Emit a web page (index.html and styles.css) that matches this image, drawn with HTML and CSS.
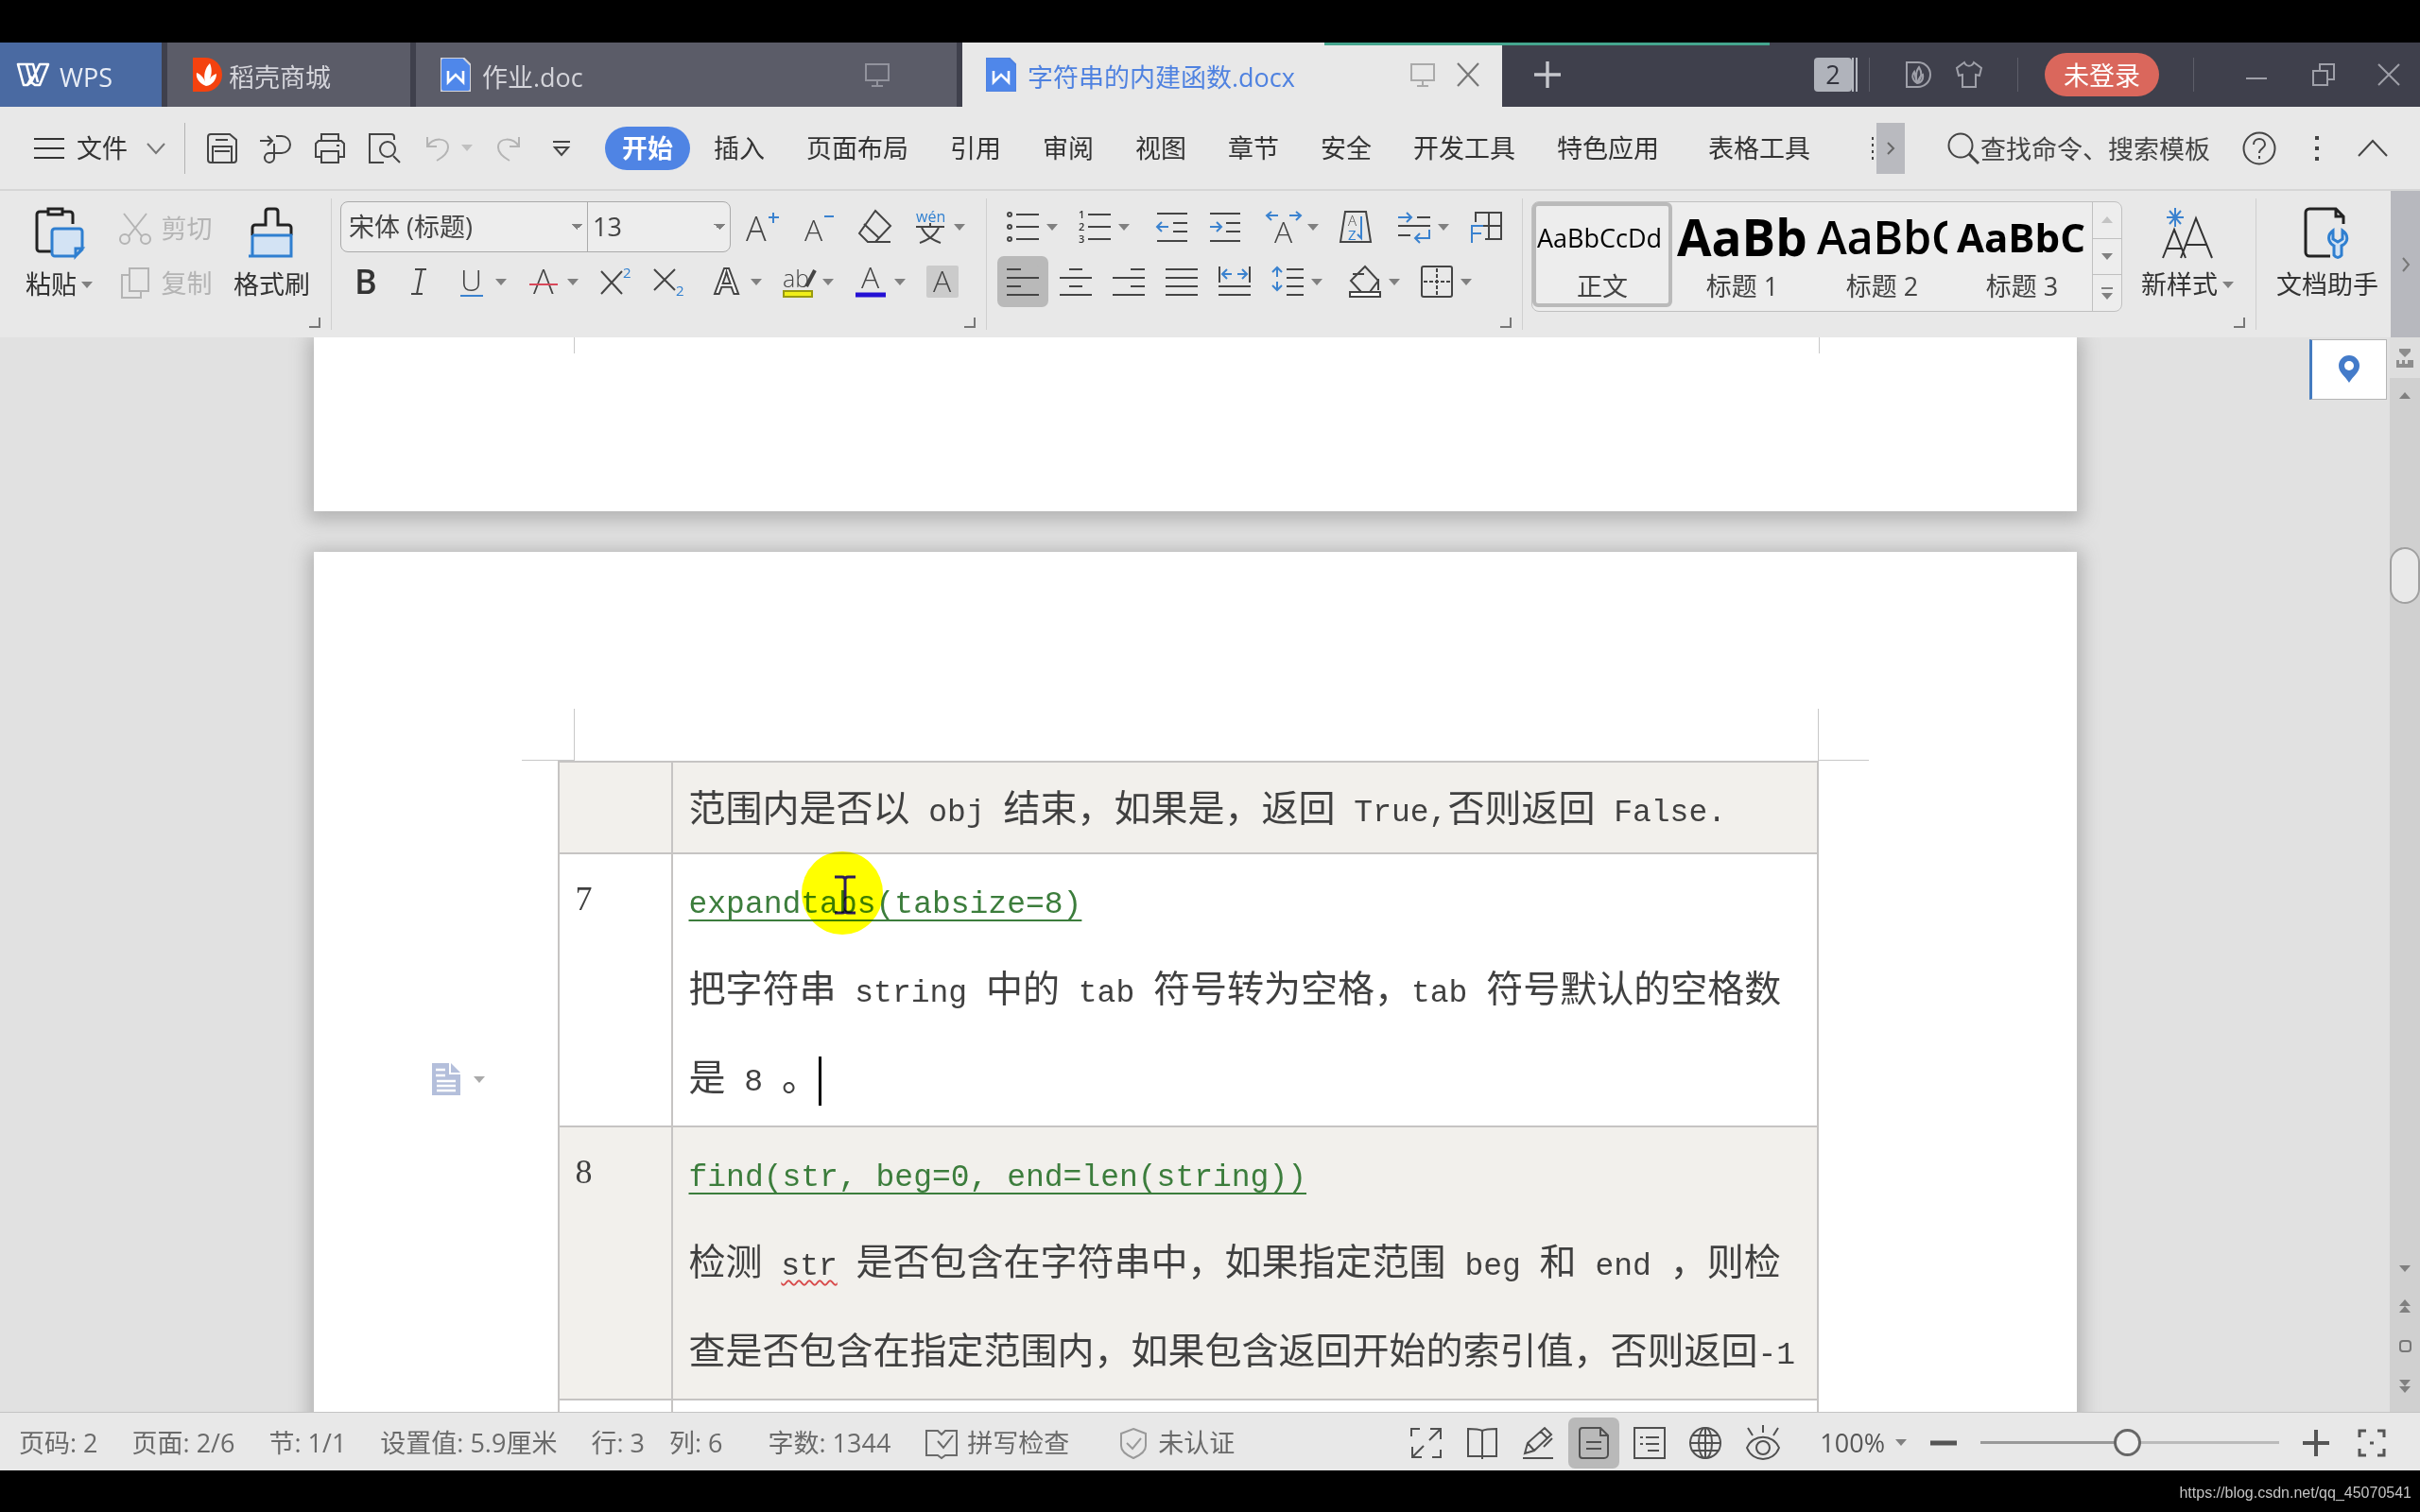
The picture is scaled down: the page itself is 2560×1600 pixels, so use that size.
FILE: index.html
```html
<!DOCTYPE html>
<html lang="zh-CN">
<head>
<meta charset="utf-8">
<title>字符串的内建函数.docx</title>
<link rel="stylesheet" href="styles.css">
</head>
<body>
<svg class="defs" aria-hidden="true">
  <symbol id="doc" viewBox="0 0 32 36"><path d="M3 0h21l8 8v25a3 3 0 0 1-3 3H3a3 3 0 0 1-3-3V3a3 3 0 0 1 3-3z" fill="#4f87ea"/><path d="M8 14v12l8-8 8 8V14" fill="none" stroke="#fff" stroke-width="2.6"/></symbol>
  <symbol id="screen" viewBox="0 0 28 28"><path d="M2 3h24v17H2zM14 20v6M8 26h12" fill="none" stroke="currentColor" stroke-width="2"/></symbol>
  <symbol id="mark" viewBox="0 0 12 12"><path d="M11 0v10H0" fill="none" stroke="#777" stroke-width="2"/></symbol>
</svg>

<header class="tabbar">
  <button class="tab home"><svg class="i34" viewBox="0 0 34 34"><path d="M1 6h9l5 19-4 3h-4zM10 6h7l5 19M24 28h-5l-4-3 9-19h9zM11 28l5-9" fill="none" stroke="#fff" stroke-width="2.6" stroke-linejoin="round"/></svg><span>WPS</span></button>
  <button class="tab store"><svg class="i36" viewBox="0 0 36 36"><path d="M3 0h13a18 18 0 0 1 0 36H3z" fill="#f4420f" stroke="none"/><path d="M17 30c-8-3-11-9-10-14 5 2 8 6 9 10-2-8 0-15 5-20 3 7 2 14-2 20 2-5 5-8 9-9 0 6-4 12-11 13z" fill="#fff" stroke="none"/></svg><span>稻壳商城</span></button>
  <button class="tab file"><svg class="docico"><use href="#doc"/></svg><span class="grow">作业.doc</span><svg class="i28 dim"><use href="#screen"/></svg></button>
  <button class="tab current"><svg class="docico"><use href="#doc"/></svg><span class="grow">字符串的内建函数.docx</span><svg class="i28"><use href="#screen"/></svg><svg class="i28" viewBox="0 0 28 28"><path d="M3 2l22 24M25 2L3 26" stroke="#777" stroke-width="2.2"/></svg></button>
  <button class="newtab" aria-label="新建"><svg class="i28" viewBox="0 0 28 28"><path d="M14 0v28M0 14h28" stroke="#c6c7cd" stroke-width="3.4"/></svg></button>
  <span class="progress"></span>
  <div class="winbar">
    <span class="count"><b>2</b></span>
    <i class="vr"></i>
    <svg class="i30" viewBox="0 0 30 30"><path d="M3 2h12a13 13 0 0 1 0 26H3z" /><path d="M14 24c-5-3-6-8-3-12l3 12c-2-8-1-13 2-17 3 5 3 11-1 16 1-4 3-7 5-8 1 5-2 9-6 9z"/></svg>
    <svg class="i30" viewBox="0 0 30 30"><path d="M10 2L2 8l2 8 4-1v13h14V15l4 1 2-8-8-6c-2 5-8 5-10 0z"/></svg>
    <i class="vr wide"></i>
    <button class="login">未登录</button>
    <i class="vr wide"></i>
    <svg class="i24 min" viewBox="0 0 24 24"><path d="M1 16h22"/></svg>
    <svg class="i26" viewBox="0 0 26 26"><path d="M2 9h15v15H2zM9 9V2h15v16h-7"/></svg>
    <svg class="i24" viewBox="0 0 24 24"><path d="M1 1l22 22M23 1L1 23"/></svg>
  </div>
</header>

<nav class="menubar">
  <button class="filemenu"><svg class="i32" viewBox="0 0 32 32"><path d="M0 6h32M0 16h32M0 26h32"/></svg>文件<svg class="i20" viewBox="0 0 20 20"><path d="M1 5l9 10 9-10" stroke="#777"/></svg></button>
  <i class="sep"></i>
  <div class="quick">
    <svg class="i34" viewBox="0 0 34 34"><path d="M5 2h20l7 6v21a3 3 0 0 1-3 3H5a3 3 0 0 1-3-3V5a3 3 0 0 1 3-3zM10 8h13M7 32V15h20v17M9 20h16"/></svg>
    <svg class="i34" viewBox="0 0 34 34"><path d="M0 9h12M8 4l5 5-5 5M17 4h6a9 9 0 0 1 0 18H9a5 5 0 1 0 6 5V12"/></svg>
    <svg class="i34" viewBox="0 0 34 34"><path d="M8 9V2h18v7M8 26H2V12l3-3h24l3 3v14h-6M8 20h18v12H8zM24 14h3"/></svg>
    <svg class="i34" viewBox="0 0 34 34"><path d="M28 8V5a3 3 0 0 0-3-3H2v30h15M27 25l7 7"/><circle cx="21" cy="18" r="8"/></svg>
    <span class="pair pale"><svg class="i28" viewBox="0 0 28 28"><path d="M2 2v10h10M2 12C8 2 24 2 24 13c0 6-5 10-12 14"/></svg><i class="dd"></i></span>
    <svg class="i28 pale" viewBox="0 0 28 28"><path d="M26 2v10H16M26 12C20 2 4 2 4 13c0 6 5 10 12 14"/></svg>
    <svg class="i20" viewBox="0 0 20 20"><path d="M1 3h18M3 9l7 8 7-8z"/></svg>
  </div>
  <div class="menus">
    <button class="active">开始</button><button>插入</button><button>页面布局</button><button>引用</button><button>审阅</button><button>视图</button><button>章节</button><button>安全</button><button>开发工具</button><button>特色应用</button><button class="extra">表格工具</button>
  </div>
  <div class="right">
    <span class="more"><svg class="dots6" viewBox="0 0 4 24"><path d="M2 0v24" stroke-dasharray="3 4"/></svg><button class="pager" aria-label="更多"><svg class="i14" viewBox="0 0 14 14"><path d="M4 1l6 6-6 6"/></svg></button></span>
    <label class="search"><svg class="i36" viewBox="0 0 36 36"><circle cx="15" cy="15" r="12.5"/><path d="M24 24l10 10" stroke-width="3"/></svg><input type="text" value="查找命令、搜索模板" aria-label="搜索"></label>
    <svg class="i36" viewBox="0 0 36 36"><circle cx="18" cy="18" r="16.5"/><path d="M12 14c0-8 12-8 12 0 0 4-6 4-6 9M18 26v3"/></svg>
    <svg class="i30" viewBox="0 0 30 30"><path d="M15 2v4M15 13v4M15 24v4" stroke-width="4"/></svg>
    <svg class="i32" viewBox="0 0 32 32"><path d="M1 24L16 8l15 16"/></svg>
  </div>
</nav>

<section class="ribbon">
  <div class="group clip">
    <button class="big"><svg class="i54" viewBox="0 0 54 54"><path d="M16 5H6a3 3 0 0 0-3 3v36a3 3 0 0 0 3 3h12M30 5h8a3 3 0 0 1 3 3v10M15 2h15v6H15z" class="k"/><path d="M22 23h26a3 3 0 0 1 3 3v19l-7 7H22a3 3 0 0 1-3-3V26a3 3 0 0 1 3-3zM51 44h-7v8z" class="bf"/></svg><span>粘贴<i class="dd"></i></span></button>
    <div class="stack pale">
      <button><svg class="i34" viewBox="0 0 34 34"><path d="M5 1l19 24M29 1L10 25"/><circle cx="6" cy="28" r="5"/><circle cx="28" cy="28" r="5"/></svg>剪切</button>
      <button><svg class="i34" viewBox="0 0 34 34"><path d="M11 1h20v24H11zM11 8H3v24h20v-7"/></svg>复制</button>
    </div>
    <button class="big"><svg class="i54" viewBox="0 0 54 54"><path d="M6 30V22a3 3 0 0 1 3-3h11V5q0-3 3-3h7q3 0 3 3v14h11a3 3 0 0 1 3 3v8" class="k"/><path d="M6 30h41v22H2M6 30v22" class="bf"/></svg><span>格式刷</span></button>
    <svg class="corner"><use href="#mark"/></svg>
  </div>

  <div class="group fontgrp">
    <div class="row">
      <div class="fontbox"><select class="face" aria-label="字体"><option>宋体 (标题)</option></select><select class="size" aria-label="字号"><option>13</option></select></div>
      <div class="set loose">
        <button class="t"><svg class="i34" viewBox="0 0 34 34"><text x="-1" y="32" font-size="36">A</text><path d="M28 2v11M23 7h11" class="b"/></svg></button>
        <button class="t"><svg class="i34" viewBox="0 0 34 34"><text x="2" y="32" font-size="32">A</text><path d="M23 6h10" class="b"/></svg></button>
        <button class="t"><svg class="i34" viewBox="0 0 34 34"><path d="M18 0l16 16-16 17h-8L1 24zM6 14l16 15M10 33h24"/></svg></button>
        <button class="t"><svg class="i34" viewBox="0 0 34 34"><text x="2" y="12" font-size="16" class="bt">wén</text><path d="M2 17h30M17 13v4M8 18c4 8 11 13 20 16M26 18c-4 8-11 13-20 16"/></svg><i class="dd"></i></button>
      </div>
    </div>
    <div class="row low">
      <div class="set">
        <button class="t"><svg class="i34" viewBox="0 0 34 34"><text x="5" y="30" font-size="36" class="sb">B</text></svg></button>
        <button class="t"><svg class="i34" viewBox="0 0 34 34"><path d="M13 4h12M9 30h12M20 4l-5 26"/></svg></button>
        <button class="t"><svg class="i34" viewBox="0 0 34 34"><text x="5" y="27" font-size="32">U</text><path d="M5 32h24" class="b"/></svg><i class="dd"></i></button>
        <button class="t"><svg class="i34" viewBox="0 0 34 34"><text x="6" y="30" font-size="36">A</text><path d="M2 20h30" stroke="#d8485a"/></svg><i class="dd"></i></button>
        <button class="t"><svg class="i34" viewBox="0 0 34 34"><path d="M2 6l22 24M24 6L2 30"/><text x="25" y="13" font-size="15" class="bt">2</text></svg></button>
        <button class="t"><svg class="i34" viewBox="0 0 34 34"><path d="M2 4l22 22M24 4L2 26"/><text x="25" y="32" font-size="15" class="bt">2</text></svg></button>
      </div>
      <div class="set">
        <button class="t"><svg class="i34" viewBox="0 0 34 34"><text x="4" y="30" font-size="38" class="outl">A</text></svg><i class="dd"></i></button>
        <button class="t"><svg class="i34" viewBox="0 0 34 34"><text x="0" y="23" font-size="25">ab</text><path d="M34 5L25 22" stroke-width="4"/><rect x="1" y="27" width="30" height="6" fill="#f0ee18" stroke="#999a10"/></svg><i class="dd"></i></button>
        <button class="t"><svg class="i34" viewBox="0 0 34 34"><text x="7" y="24" font-size="32">A</text><path d="M1 31h32" stroke="#2410d4" stroke-width="5"/></svg><i class="dd"></i></button>
        <button class="t"><svg class="i34" viewBox="0 0 34 34"><rect width="34" height="34" rx="2" fill="#cbcbcb" stroke="none"/><text x="7" y="28" font-size="32">A</text></svg></button>
      </div>
    </div>
    <svg class="corner"><use href="#mark"/></svg>
  </div>

  <div class="group paragrp">
    <div class="row">
      <div class="set">
        <button class="t"><svg class="i34" viewBox="0 0 34 34"><path d="M10 4h24M10 17h24M10 30h24"/><circle cx="3" cy="4" r="2"/><circle cx="3" cy="17" r="2"/><circle cx="3" cy="30" r="2"/></svg><i class="dd"></i></button>
        <button class="t"><svg class="i34" viewBox="0 0 34 34"><path d="M10 4h24M10 17h24M10 30h24"/><text x="0" y="8" font-size="11" class="sb">1</text><text x="0" y="21" font-size="11" class="sb">2</text><text x="0" y="34" font-size="11" class="sb">3</text></svg><i class="dd"></i></button>
      </div>
      <div class="set">
        <button class="t"><svg class="i34" viewBox="0 0 34 34"><path d="M1 3h32M18 13h15M18 22h15M1 32h32"/><path d="M1 17h12M6 12l-5 5 5 5" class="b"/></svg></button>
        <button class="t"><svg class="i34" viewBox="0 0 34 34"><path d="M1 3h32M18 13h15M18 22h15M1 32h32"/><path d="M1 17h12M8 12l5 5-5 5" class="b"/></svg></button>
      </div>
      <div class="set">
        <button class="t"><svg class="i34" viewBox="0 0 34 34"><text x="7" y="34" font-size="32">A</text><path d="M-1 5h12M4 1L-1 5l5 5M23 5h12M30 1l5 4-5 5" class="b"/></svg><i class="dd"></i></button>
        <button class="t"><svg class="i34" viewBox="0 0 34 34"><path d="M6 1h22l5 32H1z"/><text x="9" y="16" font-size="15">A</text><text x="9" y="31" font-size="15" class="bt">Z</text><path d="M23 6v23l-4-4" class="b"/></svg></button>
      </div>
      <div class="set">
        <button class="t"><svg class="i34" viewBox="0 0 34 34"><path d="M20 7h14M0 16h34M0 26h13"/><path d="M0 7h14M9 2l5 5-5 5M33 20v9H18M23 24l-5 5 5 5" class="b"/></svg><i class="dd"></i></button>
        <button class="t"><svg class="i34" viewBox="0 0 34 34"><path d="M6 12V2h27v28H16M6 16h27M20 2v28"/><path d="M14 16H2v18M2 24h10" class="b"/></svg></button>
      </div>
    </div>
    <div class="row">
      <div class="set">
        <button class="t on"><svg class="i34" viewBox="0 0 34 34"><path d="M0 4h15M0 13h34M0 22h15M0 31h34"/></svg></button>
        <button class="t"><svg class="i34" viewBox="0 0 34 34"><path d="M10 4h14M0 13h34M10 22h14M0 31h34"/></svg></button>
        <button class="t"><svg class="i34" viewBox="0 0 34 34"><path d="M19 4h15M0 13h34M19 22h15M0 31h34"/></svg></button>
        <button class="t"><svg class="i34" viewBox="0 0 34 34"><path d="M0 4h34M0 13h34M0 22h34M0 31h34"/></svg></button>
        <button class="t"><svg class="i34" viewBox="0 0 34 34"><path d="M1 1v17M33 1v17M0 22h34M0 31h34"/><path d="M4 9h10M9 4L4 9l5 5M20 9h10M25 4l5 5-5 5" class="b"/></svg></button>
        <button class="t"><svg class="i34" viewBox="0 0 34 34"><path d="M16 4h18M16 13h18M16 22h18M16 31h18"/><path d="M6 12V3M1 7l5-5 5 5M6 17v9M1 21l5 5 5-5" class="b"/></svg><i class="dd"></i></button>
      </div>
      <div class="set">
        <button class="t"><svg class="i34" viewBox="0 0 34 34"><path d="M17 1L2 16l11 12h9l9-12zM4 9h12M31 14v12"/><rect x="1" y="28" width="32" height="5" fill="#fff"/></svg><i class="dd"></i></button>
        <button class="t"><svg class="i34" viewBox="0 0 34 34"><rect x="1" y="1" width="32" height="32" rx="2"/><path d="M17 3v28M3 17h28" stroke-dasharray="4 2"/></svg><i class="dd"></i></button>
      </div>
    </div>
    <svg class="corner"><use href="#mark"/></svg>
  </div>

  <div class="group stylesgrp">
    <div class="gallery">
      <button class="style sel"><span class="pv p0">AaBbCcDd</span>正文</button>
      <button class="style"><span class="pv p1">AaBb</span>标题 1</button>
      <button class="style"><span class="pv p2">AaBbC</span>标题 2</button>
      <button class="style"><span class="pv p3">AaBbC</span>标题 3</button>
      <div class="gscroll"><span><i class="dd up"></i></span><span><i class="dd"></i></span><span class="end"><i class="bar"></i><i class="dd"></i></span></div>
    </div>
    <button class="big"><svg class="i54" viewBox="0 0 54 54"><path d="M1 54l12-30 12 30M5 44h16M20 54L36 12l17 42M26 40h21" /><path d="M14 1v20M5 11h18M8 4l12 14M20 4L8 18" class="b"/></svg><span>新样式<i class="dd"></i></span></button>
    <svg class="corner"><use href="#mark"/></svg>
  </div>
  <div class="group helper">
    <button class="big"><svg class="i54" viewBox="0 0 54 54"><path d="M30 52H8a4 4 0 0 1-4-4V6a4 4 0 0 1 4-4h28l8 8v8M36 2v8h8" class="k"/><path d="M33 25c-7 5-5 13 1 16v10q4 5 8 0V41c7-3 8-11 1-16v9l-5 3-5-3z" class="bf"/></svg><span>文档助手</span></button>
  </div>
  <button class="edge" aria-label="展开"><svg class="i20" viewBox="0 0 20 20"><path d="M7 3l6 7-6 7"/></svg></button>
</section>

<main class="work">
  <div class="canvas">
    <article class="page first"></article>
    <article class="page">
      <table>
        <tbody>
        <tr class="tint"><td class="n"></td><td>范围内是否以<code> obj </code>结束，如果是，返回<code> True,</code>否则返回<code> False.</code></td></tr>
        <tr><td class="n">7</td><td><a href="#expandtabs"><code>expandtabs(tabsize=8)</code></a><br>把字符串<code> string </code>中的<code> tab </code>符号转为空格，<code>tab </code>符号默认的空格数<br>是<code> 8 </code>。<i class="caret"></i></td></tr>
        <tr class="tint"><td class="n">8</td><td><a href="#find"><code>find(str, beg=0, end=len(string))</code></a><br>检测<code> <span class="typo">str</span> </code>是否包含在字符串中，如果指定范围<code> beg </code>和<code> end </code>，则检<br>查是否包含在指定范围内，如果包含返回开始的索引值，否则返回<code>-1</code></td></tr>
        <tr><td class="n"></td><td></td></tr>
        </tbody>
      </table>
      <span class="crop l"></span><span class="crop r"></span>
      <span class="spot"><svg viewBox="0 0 24 42"><path d="M1 2h8q3 0 3 3 0-3 3-3h8M12 4v34M1 40h8q3 0 3-3 0 3 3 3h8" fill="none" stroke="#2c1c5c" stroke-width="3"/></svg></span>
      <button class="para" aria-label="段落布局"><svg viewBox="0 0 30 34"><path d="M0 0h18v12h12v22H0z" fill="#b4bfdb"/><path d="M20 0l10 10H20z" fill="#b4bfdb"/><path d="M4 7h10M4 13h10M5 19h20M5 24h20M5 29h20" stroke="#fff" stroke-width="2.5"/></svg><i class="dd"></i></button>
    </article>
    <button class="pin" aria-label="定位"><svg viewBox="0 0 22 30"><path d="M11 0a11 11 0 0 1 11 11c0 7-6 10-11 18C6 21 0 18 0 11A11 11 0 0 1 11 0z" fill="#447bc9"/><circle cx="11" cy="11" r="5" fill="#fff"/></svg></button>
  </div>
  <aside class="scroll">
    <span class="ruler"><svg viewBox="0 0 18 20"><path d="M3 0h12v3l-6 6-6-6zM0 12h3v4h3v-4h3v4h3v-4h6v8H0z" fill="#8e8e8e"/></svg></span>
    <i class="dd up"></i>
    <span class="thumb"></span>
    <div class="nav"><i class="dd"></i><span><i class="dd up"></i><i class="dd up"></i></span><i class="ring"></i><span><i class="dd"></i><i class="dd"></i></span></div>
  </aside>
</main>

<footer class="status">
  <div class="info">
    <span>页码: 2</span><span>页面: 2/6</span><span>节: 1/1</span><span>设置值: 5.9厘米</span><span>行: 3</span><span class="col">列: 6</span><span>字数: 1344</span>
    <span class="wi"><svg class="i36" viewBox="0 0 36 36"><path d="M2 5h12l4 4 4-4h12v26H22l-4 3-4-3H2zM14 16l6 7 10-13"/></svg>拼写检查</span>
    <span class="wi cert"><svg class="i34" viewBox="0 0 34 34"><path d="M17 2l13 5v13c0 6-6 10-13 13C10 30 4 26 4 20V7zM10 17l6 6 9-11" stroke="#999"/></svg>未认证</span>
  </div>
  <div class="views">
    <svg class="i34" viewBox="0 0 34 34"><path d="M1 10V2h9M21 2h11v11M31 3L20 14M32 24v8h-9M12 32H2V21M3 31l11-11"/></svg>
    <svg class="i34" viewBox="0 0 34 34"><path d="M17 4c-4-2-10-2-15-2v29h30V2c-5 0-11 0-15 2zM17 4v30"/></svg>
    <svg class="i34" viewBox="0 0 34 34"><path d="M3 28l3-11L24 1l7 7-18 17zM6 17l7 8M20 5l7 7M32 12l-9 9M1 33h32"/></svg>
    <span class="on"><svg class="i34" viewBox="0 0 34 34"><path d="M5 1h19l8 8v20a4 4 0 0 1-4 4H5a3 3 0 0 1-3-3V4a3 3 0 0 1 3-3zM24 1v8h8M9 16h16M9 23h16"/></svg></span>
    <svg class="i34" viewBox="0 0 34 34"><path d="M1 1h32v32H1zM7 11h3M7 18h3M13 11h14M13 18h14M15 25h12"/></svg>
    <svg class="i34" viewBox="0 0 34 34"><circle cx="17" cy="17" r="16"/><ellipse cx="17" cy="17" rx="7" ry="16"/><path d="M3 9h28M1 17h32M3 25h28M17 1v32"/></svg>
    <svg class="i38" viewBox="0 0 38 38"><circle cx="19" cy="24" r="7"/><path d="M2 24c6-15 28-15 34 0-6 16-28 16-34 0zM19 0v8M3 3l5 8M35 3l-5 8"/></svg>
  </div>
  <div class="zoom">
    <button class="pct">100%<i class="dd"></i></button>
    <svg class="i28" viewBox="0 0 28 28"><path d="M0 14h28" stroke-width="5"/></svg>
    <input type="range" min="0" max="100" value="49" aria-label="缩放">
    <svg class="i28" viewBox="0 0 28 28"><path d="M0 14h28M14 0v28" stroke-width="4"/></svg>
    <svg class="i30" viewBox="0 0 30 30"><path d="M2 9V2h7M21 2h7v7M28 21v7h-7M9 28H2v-7M13 15h4" stroke-width="3"/></svg>
  </div>
</footer>
<div class="source">https://blog.csdn.net/qq_45070541</div>
</body>
</html>
```
FILE: styles.css
```css
* { box-sizing: border-box; }
body {
  margin: 0;
  height: 100vh;
  padding-top: 45px;
  background: #000;
  color: #333;
  display: flex;
  flex-direction: column;
  overflow: hidden;
  font: 27px/36px "Open Sans", "Noto Sans CJK SC", sans-serif;
}
button, select, input {
  font: inherit;
  color: inherit;
  background: none;
  border: 0;
  padding: 0;
  margin: 0;
}
button { display: flex; align-items: center; white-space: nowrap; }
svg { display: block; flex: none; fill: none; stroke: currentColor; stroke-width: 2; overflow: visible; }
svg text { fill: #444; stroke: none; font-weight: 300; }
svg .bt { fill: #2f7fd0; font-weight: 400; }
svg .sb { fill: #333; font-weight: 600; }
svg .outl { fill: #fff; stroke: #444; stroke-width: 2; font-weight: 600; }
svg .b { stroke: #3a82cf; }
svg .k { stroke: #222; stroke-width: 3; }
svg .bf { stroke: #2f7fd0; stroke-width: 3; fill: #d3e3f4; }
.defs { position: absolute; width: 0; height: 0; }
.i14 { width: 14px; height: 14px; }
.i20 { width: 20px; height: 20px; }
.i24 { width: 24px; height: 24px; }
.i26 { width: 26px; height: 26px; }
.i28 { width: 28px; height: 28px; }
.i30 { width: 30px; height: 30px; }
.i32 { width: 32px; height: 32px; }
.i34 { width: 34px; height: 34px; }
.i36 { width: 36px; height: 36px; }
.i38 { width: 38px; height: 38px; }
.i54 { width: 54px; height: 54px; }
.dd {
  flex: none;
  display: block;
  border: 6px solid transparent;
  border-top: 7px solid #808080;
  border-bottom: 0;
}
.dd.up { border-top: 0; border-bottom: 7px solid #808080; }
.grow { flex: 1; text-align: left; }

/* Tab strip */
.tabbar { flex: none; height: 68px; display: flex; background: #3f404c; position: relative; }
.tab { background: #5b5c68; color: #d4d4da; margin-right: 6px; }
.tab span { padding-top: 5px; }
.home { width: 171px; padding-left: 18px; gap: 11px; background: #4a6aa2; color: #e8edf6; }
.store { width: 257px; padding-left: 24px; gap: 5px; }
.file { width: 572px; padding: 0 70px 0 26px; gap: 12px; }
.docico { width: 32px; height: 36px; }
.dim { color: #92939d; }
.current { width: 571px; margin: 0; padding: 0 22px 0 25px; gap: 12px; background: #e8e8e8; color: #4f82e0; }
.current .i28 { color: #aaa; }
.current .i28 + .i28 { margin-left: 8px; }
.newtab { padding-left: 34px; }
.progress { position: absolute; left: 1401px; top: 0; width: 471px; height: 3px; background: #45a58e; }
.winbar { margin-left: auto; display: flex; align-items: center; padding-right: 21px; gap: 24px; color: #9fa0a9; }
.count { border-right: 6px double #b5b8bf; height: 36px; }
.count b { display: block; width: 40px; height: 36px; border-radius: 4px; background: #b0b3bb; color: #33343e; text-align: center; font-weight: 400; }
.vr { width: 1px; height: 36px; background: #5d5e69; margin: 0 12px 0 -12px; }
.vr.wide { margin: 0 4px 0 12px; }
.vr.wide + .min { margin-left: 26px; }
.login { height: 46px; padding: 2px 20px 0; border-radius: 23px; background: #da675c; color: #fff; }
.min { margin: 0 22px 0 26px; }
.winbar .i26 { margin-right: 20px; }

/* Menu row */
.menubar { flex: none; height: 87px; display: flex; align-items: center; background: #e8e8e8; padding-left: 36px; }
.filemenu { gap: 13px; }
.filemenu .i20 { margin-left: 7px; }
.sep { width: 1px; height: 54px; margin: 0 22px 0 20px; background: #b4b4b4; }
.quick { display: flex; align-items: center; gap: 23px; color: #444; }
.quick .i20 { margin-left: 10px; }
.pair { display: flex; align-items: center; gap: 10px; margin-left: 4px; }
.pale { color: #b4b4b4; }
.pale .dd { border-top-color: #c0c0c0; }
.menus { display: flex; align-items: center; gap: 44px; margin-left: 36px; }
.menus .active { height: 46px; padding: 0 18px; margin-right: -19px; border-radius: 23px; background: #4f84e4; color: #fff; font-weight: 700; }
.menus .extra { margin-left: 8px; }
.right { margin-left: auto; padding-right: 34px; display: flex; align-items: center; gap: 28px; color: #444; }
.more { display: flex; align-items: center; gap: 2px; margin-right: 16px; }
.dots6 { width: 4px; height: 24px; }
.pager { width: 30px; height: 54px; justify-content: center; background: #b9babf; color: #666; }
.search { display: flex; align-items: center; }
.search input { width: 249px; height: 40px; }

/* Ribbon */
.ribbon { flex: none; height: 157px; display: flex; background: #e8e8e8; border-top: 2px solid #d6d6d6; color: #444; }
.group { position: relative; margin: 8px 0; padding: 3px 10px 0; border-right: 1px solid #cfcfcf; }
.corner { position: absolute; right: 11px; bottom: 1px; width: 12px; height: 12px; }
.clip { width: 351px; padding: 9px 22px 0 27px; display: flex; justify-content: space-between; align-items: flex-start; }
.big { flex-direction: column; align-items: center; gap: 10px; color: #333; }
.big span { display: flex; align-items: center; gap: 5px; }
.stack { display: flex; flex-direction: column; gap: 22px; padding: 5px 0 0 5px; }
.stack button { gap: 11px; }
.row { height: 54px; display: flex; align-items: center; gap: 17px; }
.row + .row { margin-top: 4px; }
.low { padding-left: 10px; }
.set { display: flex; align-items: center; gap: 22px; }
.set.loose { gap: 25px; }
.set + .set { margin-left: 11px; }
.t { gap: 8px; width: 34px; }
.t:has(.dd) { width: 54px; }
.fontgrp { width: 693px; padding-left: 9px; }
.paragrp { width: 567px; padding-left: 21px; }
.fontbox { width: 413px; height: 54px; display: flex; border: 1px solid #aaa; border-radius: 8px; background: #ededed; }
.fontbox select {
  appearance: none;
  padding-left: 8px;
  border-radius: 0;
  background:
    linear-gradient(to bottom left, #808080 50%, transparent 50%) right 11px center / 6px 6px no-repeat,
    linear-gradient(to bottom right, #808080 50%, transparent 50%) right 5px center / 6px 6px no-repeat;
}
.fontbox .face { flex: 1; border-right: 1px solid #aaa; }
.fontbox .size { width: 150px; padding-left: 5px; }
.on { background: #b9b9b9; box-shadow: 0 0 0 10px #b9b9b9; border-radius: 2px; }
.stylesgrp { display: flex; align-items: flex-start; gap: 20px; padding: 2px 23px 0 9px; }
.gallery { display: flex; width: 625px; height: 117px; margin-top: 1px; border: 1px solid #c0c0c0; border-radius: 8px; background: #ededed; }
.style { width: 148px; flex-direction: column; padding-top: 3px; overflow: hidden; color: #444; }
.sel { border: 4px solid #bababa; border-radius: 6px; height: 111px; padding-top: 0; }
.pv { height: 68px; line-height: 68px; width: 138px; overflow: hidden; color: #000; text-align: left; }
.p1 { font-size: 53px; font-weight: 700; }
.p2 { font-size: 48px; font-weight: 600; }
.p3 { font-size: 42px; font-weight: 700; }
.gscroll { flex: 1; border-left: 1px solid #c0c0c0; display: flex; flex-direction: column; }
.gscroll span { flex: 1; display: flex; flex-direction: column; gap: 4px; align-items: center; justify-content: center; border-bottom: 1px solid #c0c0c0; }
.gscroll .end { border: 0; }
.gscroll .up { border-bottom-color: #c4c4c4; }
.bar { width: 12px; height: 2px; background: #808080; }
.stylesgrp .big, .helper .big { padding-top: 7px; }
.helper { border: 0; padding: 2px 10px 0 21px; }
.edge { margin-left: auto; width: 31px; justify-content: center; background: #b7b8be; color: #777; }

/* Document area */
.work { flex: 1; min-height: 0; display: flex; overflow: hidden; border-bottom: 1px solid #c4c4c4; }
.canvas { flex: 1; min-width: 0; position: relative; background: #e1e1e1; display: flex; flex-direction: column; align-items: center; gap: 43px; }
.page { flex: none; position: relative; width: 100%; max-width: 1865px; background: #fff; padding: 221px 273px 0 258px; box-shadow: 0 4px 18px 6px #b4b4b4; }
.page.first { height: 184px; padding: 0 272px 0 275px; }
.page.first::before { content: ""; display: block; height: 17px; border: 1px solid #c8c8c8; border-width: 0 1px; }
table { width: 100%; table-layout: fixed; border-collapse: collapse; }
td { border: 2px solid #c6c4c3; padding: 0 0 5px 17px; vertical-align: top; font-size: 39px; line-height: 94px; white-space: nowrap; color: #404040; }
tr:first-child td { padding-bottom: 1px; }
tr:last-child td { height: 97px; }
.tint { background: #f2f0ec; }
.n { width: 120px; font: 36px/94px "Liberation Serif", serif; }
code { font: 33px/40px "Liberation Mono", monospace; white-space: pre; }
td a { color: #3c7d3c; text-decoration: underline 2px; text-underline-offset: 7px; }
.typo { text-decoration: underline wavy #d84a4a 2px; text-underline-offset: 5px; }
.caret { display: inline-block; width: 3px; height: 52px; background: #000; vertical-align: middle; }
.crop { position: absolute; top: 166px; width: 56px; height: 55px; border-bottom: 1px solid #c8c8c8; }
.crop.l { left: 220px; border-right: 1px solid #c8c8c8; }
.crop.r { right: 220px; width: 54px; border-left: 1px solid #c8c8c8; }
.spot { position: absolute; left: 516px; top: 317px; width: 86px; height: 88px; padding: 4px 0 0 6px; border-radius: 50%; background: #ffff00; mix-blend-mode: multiply; display: grid; place-items: center; }
.spot svg { width: 24px; height: 42px; }
.para { position: absolute; left: 125px; top: 541px; gap: 14px; }
.para svg { width: 30px; height: 34px; stroke: none; }
.para .dd { border-top-color: #aaa; }
.pin { position: absolute; right: 3px; top: 2px; width: 82px; height: 64px; justify-content: center; background: #fff; border: 1px solid #b5b5b5; border-left: 3px solid #447bc0; }
.pin svg { width: 22px; height: 30px; stroke: none; }
.scroll { width: 32px; background: #d0d0d0; display: flex; flex-direction: column; align-items: center; }
.ruler { width: 32px; height: 43px; margin-bottom: 15px; background: #dedede; display: grid; place-items: center; }
.ruler svg { width: 18px; height: 20px; stroke: none; }
.thumb { width: 32px; height: 60px; margin-top: 157px; border: 2px solid #a0a0a0; border-radius: 16px; background: #e9e9e9; }
.nav { margin-top: auto; padding-bottom: 20px; display: flex; flex-direction: column; align-items: center; gap: 29px; }
.ring { width: 13px; height: 13px; border: 2px solid #777; border-radius: 4px; }

/* Status bar */
.status { flex: none; height: 61px; background: #e8e8e8; color: #6a6a6a; display: flex; align-items: center; justify-content: space-between; padding: 2px 36px 0 20px; }
.info { display: flex; gap: 36px; margin-right: auto; white-space: nowrap; }
.info .col { margin: 0 12px 0 -10px; }
.wi { display: flex; align-items: center; gap: 9px; }
.cert { margin-left: 15px; }
.views { display: flex; align-items: center; gap: 25px; color: #505050; }
.zoom { display: flex; align-items: center; gap: 25px; margin-left: 41px; color: #555; }
.pct { gap: 11px; }
.zoom input { appearance: none; width: 316px; height: 30px; background: linear-gradient(90deg, #999 48%, #bbb 48%) center / 100% 3px no-repeat; }
.zoom input::-webkit-slider-thumb { appearance: none; width: 29px; height: 29px; border: 3px solid #666; border-radius: 50%; background: #eee; }
.zoom .i30 { margin-left: 5px; }
.source { flex: none; height: 44px; padding-right: 9px; text-align: right; font: 16px/48px "Liberation Sans", sans-serif; color: #c4c4c4; }
```
